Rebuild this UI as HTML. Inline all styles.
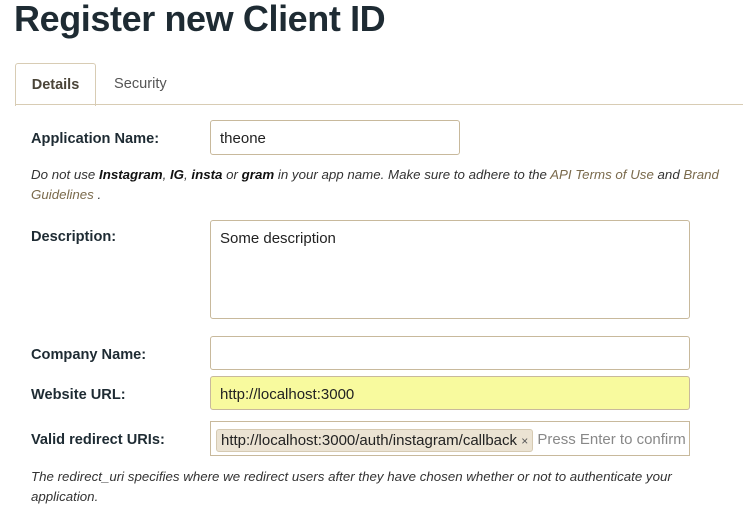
<!DOCTYPE html>
<html><head><style>
body{margin:0;background:#fff;font-family:"Liberation Sans",sans-serif;color:#222;width:746px;height:505px;overflow:hidden;position:relative}
.a{position:absolute}
h1{position:absolute;left:14px;top:-2px;margin:0;font-size:36px;font-weight:bold;color:#1e2b33;letter-spacing:-0.4px}
.tab{left:15px;top:63px;width:79px;height:42px;border:1px solid #d8ccb4;border-bottom:none;border-radius:3px 3px 0 0;background:#fff;font-weight:bold;font-size:14.5px;color:#4a4438;text-align:center;line-height:42px}
.line{left:15px;top:104px;width:728px;height:1px;background:#d8ccb4}
.lbl{left:31px;font-weight:bold;font-size:14.6px;color:#1e2b33}
.in{border:1px solid #c8b99c;border-radius:3px;background:#fff;font-size:15px;color:#222;padding-left:9px;box-sizing:border-box}
.help{left:31px;font-style:italic;font-size:13.3px;color:#333}
.help b{color:#111}
.lk{color:#7a6a4c}
</style></head><body>
<h1>Register new Client ID</h1>
<div class="a tab">Details</div>
<div class="a line"></div>
<div class="a" style="left:114px;top:76px;font-size:14.6px;color:#555">Security</div>
<div class="a lbl" style="top:131px">Application Name:</div>
<div class="a in" style="left:210px;top:120px;width:250px;height:35px;line-height:35px">theone</div>
<div class="a help" style="top:165px;line-height:20px;width:700px">Do not use <b>Instagram</b>, <b>IG</b>, <b>insta</b> or <b>gram</b> in your app name. Make sure to adhere to the <span class="lk">API Terms of Use</span> and <span class="lk">Brand Guidelines</span> .</div>
<div class="a lbl" style="top:229px">Description:</div>
<div class="a in" style="left:210px;top:220px;width:480px;height:99px;padding-top:9px">Some description</div>
<div class="a lbl" style="top:347px">Company Name:</div>
<div class="a in" style="left:210px;top:336px;width:480px;height:34px"></div>
<div class="a lbl" style="top:387px">Website URL:</div>
<div class="a in" style="left:210px;top:376px;width:480px;height:34px;line-height:35px;background:#f8fa9e">http://localhost:3000</div>
<div class="a lbl" style="top:432px">Valid redirect URIs:</div>
<div class="a in" style="left:210px;top:421px;width:480px;height:35px;border-radius:0;padding-left:5px;line-height:35px;overflow:hidden;white-space:nowrap"><span style="display:inline-block;background:#ebe3d3;border:1px solid #d6cab2;border-radius:3px;height:21px;line-height:21px;padding:0 4px;vertical-align:middle">http://localhost:3000/auth/instagram/callback <span style="font-size:12px;color:#555">×</span></span> <span style="color:#888">Press Enter to confirm</span></div>
<div class="a help" style="top:467px;line-height:20px;width:665px">The redirect_uri specifies where we redirect users after they have chosen whether or not to authenticate your application.</div>
</body></html>
